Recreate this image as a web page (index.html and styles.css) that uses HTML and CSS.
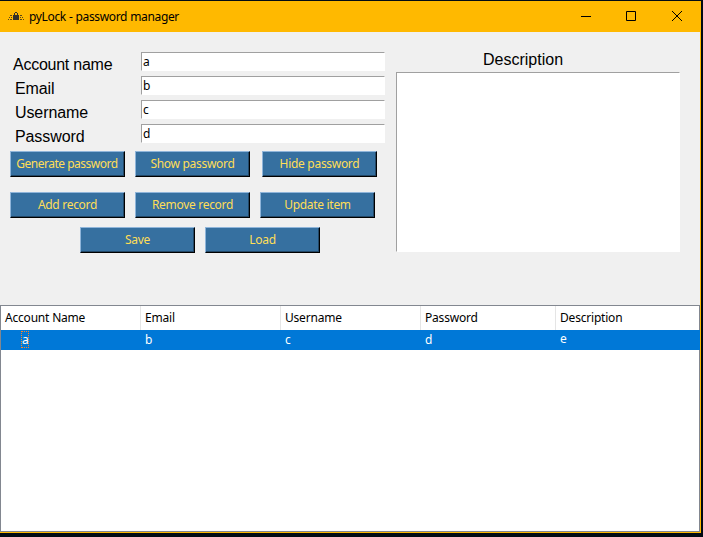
FILE: index.html
```html
<!DOCTYPE html>
<html lang="en">
<head>
    <meta charset="UTF-8">
    <title>pyLock - password manager</title>
    <link rel="stylesheet" href="styles.css">
</head>
<body>
    <div class="window">
        <header class="title-bar">
            <svg class="app-icon" width="16" height="16" viewBox="0 0 16 16" shape-rendering="crispEdges">
                <path fill="#33312a" d="M5 6h6v5H5zM6 4h1v2H6zM9 4h1v2H9zM7 3h2v1H7z"/>
                <path fill="#5a4719" d="M2 6h2v1H2zM1 8h1v1H1zM3 8h1v1H3zM0 10h1v1H0zM2 10h2v1H2zM12 6h2v1h-2zM12 8h1v1h-1zM14 8h1v1h-1zM12 10h2v1h-2zM15 10h1v1h-1z"/>
            </svg>
            <span class="title">pyLock - password manager</span>
            <div class="window-controls">
                <svg width="46" height="30" viewBox="0 0 46 30"><path d="M18 15.500h10"/></svg>
                <svg width="46" height="30" viewBox="0 0 46 30"><path d="M18.500 10.500h9v9h-9z"/></svg>
                <svg width="46" height="30" viewBox="0 0 46 30"><path d="M18 10l10 10M28 10L18 20"/></svg>
            </div>
        </header>

        <main class="content">
            <div class="left-panel">
                <form class="fields">
                    <label class="account-label" for="account">Account name</label>
                    <input type="text" id="account" value="a">
                    <label for="email">Email</label>
                    <input type="text" id="email" value="b">
                    <label for="username">Username</label>
                    <input type="text" id="username" value="c">
                    <label for="password">Password</label>
                    <input type="text" id="password" value="d">
                </form>
                <div class="button-row first-row">
                    <button class="generate">Generate password</button>
                    <button>Show password</button>
                    <button>Hide password</button>
                </div>
                <div class="button-row">
                    <button>Add record</button>
                    <button>Remove record</button>
                    <button>Update item</button>
                </div>
                <div class="button-row file-row">
                    <button>Save</button>
                    <button>Load</button>
                </div>
            </div>
            <div class="right-panel">
                <label for="description">Description</label>
                <textarea id="description"></textarea>
            </div>
        </main>

        <section class="records">
            <div class="record-row record-head">
                <span>Account Name</span>
                <span>Email</span>
                <span>Username</span>
                <span>Password</span>
                <span>Description</span>
            </div>
            <div class="record-row selected">
                <span class="tree-cell"><span class="focus">a</span></span>
                <span>b</span>
                <span>c</span>
                <span>d</span>
                <span class="description-cell">e</span>
            </div>
        </section>
    </div>
</body>
</html>
```
FILE: styles.css
```css
* {
    box-sizing: border-box;
}

body {
    margin: 0;
    padding: 1px 2px 4px 0;
    height: 537px;
    overflow: hidden;
    background: #020b14;
    font-family: "Noto Sans", "Open Sans", sans-serif;
    font-size: 12px;
    color: #000;
}

.window {
    display: flex;
    flex-direction: column;
    height: 532px;
    background: #f0f0f0;
    border-right: 1px solid #ffb900;
    border-bottom: 1px solid #ffb900;
}

.title-bar {
    display: flex;
    align-items: center;
    height: 31px;
    padding-left: 8px;
    margin-right: -1px;
    background: #ffb900;
}

.title {
    margin-left: 5px;
    letter-spacing: -0.35px;
    word-spacing: 0.3px;
}

.window-controls {
    display: flex;
    align-self: flex-start;
    margin-left: auto;
    margin-right: 1px;
}

.window-controls svg {
    fill: none;
    stroke: #000;
    stroke-width: 1;
}

/* the buttons sit 45px apart on the left, 46px on the right */
.window-controls svg:first-child {
    margin-right: -1px;
}

.content {
    display: flex;
    height: 273px;
}

.left-panel {
    width: 396px;
    padding-top: 20px;
}

.fields {
    display: grid;
    grid-template-columns: 126px 244px;
    row-gap: 5px;
    margin-left: 15px;
}

.fields label,
.right-panel label {
    font-family: "Liberation Sans", Arial, sans-serif;
    font-size: 16px;
    line-height: 19px;
}

.fields label {
    position: relative;
    top: 3px;
    letter-spacing: -0.1px;
}

.fields .account-label {
    left: -2px;
    letter-spacing: -0.25px;
}

.fields input {
    height: 19px;
    padding: 0 1px 1px;
    border: 1px solid #fff;
    border-top-color: #a0a0a0;
    border-left-color: #a0a0a0;
    font: inherit;
    line-height: 16px;
    outline: none;
}

.button-row {
    display: flex;
    gap: 10px;
    margin: 15px 0 0 10px;
}

.first-row {
    margin-top: 8px;
}

.first-row button:last-child {
    margin-left: 2px;
}

.file-row {
    margin: 9px 0 0 80px;
}

button {
    width: 115px;
    height: 26px;
    padding: 0 0 1px;
    border: 1px solid #000;
    border-top-color: #8fb5da;
    border-left-color: #8fb5da;
    box-shadow: inset -1px -1px #234867;
    background: #3670a0;
    color: #ffde57;
    font: inherit;
    letter-spacing: -0.3px;
    white-space: nowrap;
}

.generate {
    padding-right: 1px;
    letter-spacing: -0.5px;
}

.right-panel {
    display: flex;
    flex-direction: column;
    width: 284px;
    padding-top: 18px;
}

.right-panel label {
    margin-left: 87px;
}

.right-panel textarea {
    height: 180px;
    margin-top: 3px;
    border: 1px solid #fff;
    border-top-color: #a0a0a0;
    border-left-color: #a0a0a0;
    resize: none;
    outline: none;
}

.records {
    flex: 1;
    border: 1px solid #828790;
    background: #fff;
    letter-spacing: -0.2px;
}

.record-row {
    display: grid;
    grid-template-columns: 140px 140px 140px 135px 1fr;
}

.record-row > span {
    padding-left: 4px;
}

.record-head > span {
    height: 24px;
    line-height: 24px;
    border-right: 1px solid #e5e5e5;
}

.record-head > span:last-child {
    border-right: none;
}

.selected {
    height: 20px;
    line-height: 20px;
    margin-right: -1px;
    background: #0078d7;
    color: #fff;
}

.record-row .tree-cell {
    padding-left: 20px;
}

.focus {
    display: block;
    width: 8px;
    height: 17px;
    margin-top: 1px;
    line-height: 15px;
    border: 1px dotted #ff8728;
}

.record-row .description-cell {
    line-height: 17px;
}
```
